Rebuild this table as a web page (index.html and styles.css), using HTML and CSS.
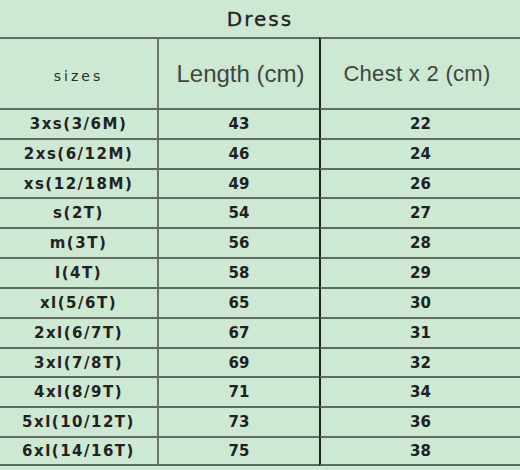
FILE: index.html
```html
<!DOCTYPE html>
<html>
<head>
<meta charset="utf-8">
<link rel="stylesheet" href="styles.css">
</head>
<body>
<div class="chart">
  <div class="title">Dress</div>
  <div class="grid">
    <div class="cell head sizes">sizes</div>
    <div class="cell head len">Length (cm)</div>
    <div class="cell head chest">Chest x 2 (cm)</div>

    <div class="cell sz">3xs(3/6M)</div><div class="cell num">43</div><div class="cell num">22</div>
    <div class="cell sz">2xs(6/12M)</div><div class="cell num">46</div><div class="cell num">24</div>
    <div class="cell sz">xs(12/18M)</div><div class="cell num">49</div><div class="cell num">26</div>
    <div class="cell sz">s(2T)</div><div class="cell num">54</div><div class="cell num">27</div>
    <div class="cell sz">m(3T)</div><div class="cell num">56</div><div class="cell num">28</div>
    <div class="cell sz">l(4T)</div><div class="cell num">58</div><div class="cell num">29</div>
    <div class="cell sz">xl(5/6T)</div><div class="cell num">65</div><div class="cell num">30</div>
    <div class="cell sz">2xl(6/7T)</div><div class="cell num">67</div><div class="cell num">31</div>
    <div class="cell sz">3xl(7/8T)</div><div class="cell num">69</div><div class="cell num">32</div>
    <div class="cell sz">4xl(8/9T)</div><div class="cell num">71</div><div class="cell num">34</div>
    <div class="cell sz">5xl(10/12T)</div><div class="cell num">73</div><div class="cell num">36</div>
    <div class="cell sz">6xl(14/16T)</div><div class="cell num">75</div><div class="cell num">38</div>
  </div>
</div>
</body>
</html>
```
FILE: styles.css
```css
html, body {
  margin: 0;
  padding: 0;
  background: #cde8d3;
}
.chart {
  width: 520px;
  height: 470px;
  background: #cde8d3;
  color: #1e221f;
}
.title {
  height: 37px;
  display: flex;
  align-items: center;
  justify-content: center;
  font-family: "DejaVu Sans", sans-serif;
  font-size: 20px;
  letter-spacing: 2px;
  color: #1e221f;
  -webkit-text-stroke: 0.3px #1e221f;
}
.grid {
  display: grid;
  grid-template-columns: 157px 162px 1fr;
  grid-template-rows: 71px repeat(12, 29.83px);
}
.cell {
  box-sizing: border-box;
  border-top: 2px solid #5f6a60;
  display: flex;
  align-items: center;
  justify-content: center;
  white-space: nowrap;
}
.cell:nth-child(3n+2) {
  border-left: 2px solid #6a726a;
}
.cell:nth-child(3n) {
  border-left: 2px solid #1f2420;
}
.cell:nth-last-child(-n+3) {
  border-bottom: 2px solid #5f6a60;
}
.head {
  font-family: "Liberation Sans", sans-serif;
  color: #414541;
}
.sizes {
  font-size: 14px;
  letter-spacing: 3px;
  font-family: "DejaVu Sans", sans-serif;
  color: #2a2e2b;
  padding-top: 5px;
}
.len {
  font-size: 24px;
  padding-left: 3px;
}
.chest {
  font-size: 22px;
  letter-spacing: 0.3px;
  padding-right: 7px;
}
.sz {
  font-family: "DejaVu Sans", sans-serif;
  font-weight: bold;
  font-size: 15px;
  letter-spacing: 1.5px;
  color: #222;
}
.num {
  font-family: "DejaVu Sans", sans-serif;
  font-weight: bold;
  font-size: 15px;
  color: #1e221f;
}
```
